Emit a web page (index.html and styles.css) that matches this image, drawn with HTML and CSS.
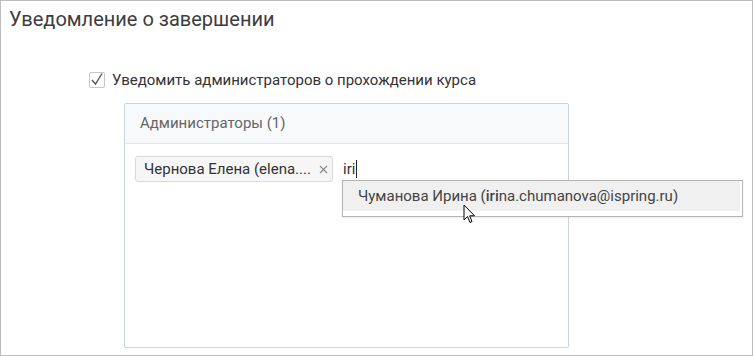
FILE: index.html
```html
<!DOCTYPE html>
<html lang="ru">
	<head>
		<meta charset="UTF-8">
		<title>Уведомление о завершении</title>
		<link rel="stylesheet" href="styles.css">
	</head>
	<body>
		<div class="frame">
			<h1 class="title">Уведомление о завершении</h1>
			<label class="check">
				<span class="box">
					<svg width="16" height="16" viewBox="0 0 16 16">
						<path d="M3 8 L6.5 12 L13 1.5" fill="none" stroke="#555" stroke-width="1.4"/>
					</svg>
				</span>
				Уведомить администраторов о прохождении курса
			</label>
			<div class="panel">
				<div class="panel-head">Администраторы (1)</div>
				<div class="panel-body">
					<div class="picker">
						<span class="tag">Чернова Елена (elena....
							<svg class="close" width="9" height="9" viewBox="0 0 9 9">
								<path d="M1 1 L8 8 M8 1 L1 8" stroke="#8a8a8a" stroke-width="1.2"/>
							</svg>
						</span>
						<span class="query">iri<b class="caret"></b></span>
						<div class="drop">
							<div class="drop-item">Чуманова Ирина (<strong>iri</strong>na.chumanova@ispring.ru)</div>
						</div>
						<svg class="cursor" width="13" height="21" viewBox="0 0 13 21">
							<path d="M1 1 L1 16 L4.5 12.5 L7 18.5 L9 17.6 L6.6 11.8 L11.5 11.8 Z" fill="#fff" stroke="#000" stroke-width="1" stroke-linejoin="round"/>
						</svg>
					</div>
				</div>
			</div>
		</div>
	</body>
</html>
```

FILE: styles.css
```css
* {
	margin: 0;
	padding: 0;
	box-sizing: border-box;
}

body {
	font-family: Roboto, "Noto Sans", sans-serif;
	color: #333;
	background: #fff;
}

.frame {
	width: 753px;
	height: 356px;
	border: 1px solid #bdbdbd;
	padding: 0 0 0 8px;
}

.title {
	font-size: 20px;
	font-weight: 400;
	color: #3d3d3d;
	line-height: 24px;
	padding-top: 6px;
}

.check {
	display: flex;
	align-items: center;
	gap: 7px;
	height: 18px;
	margin: 40px 0 0 80px;
	font-size: 15px;
	line-height: 18px;
	color: #333;
}

.box {
	display: block;
	width: 16px;
	height: 16px;
	border: 1px solid #c8c8c8;
	border-radius: 2px;
	background: #fff;
}

.box svg {
	display: block;
	margin: -1px 0 0 -1px;
}

.panel {
	width: 445px;
	height: 245px;
	margin: 14px 0 0 115px;
	border: 1px solid #c9d3db;
	border-radius: 2px;
}

.panel-head {
	height: 40px;
	line-height: 39px;
	padding-left: 15px;
	font-size: 15px;
	color: #666;
	background: #f7f9fb;
	border-bottom: 1px solid #e3e8ec;
}

.panel-body {
	padding: 12px 10px;
}

.picker {
	position: relative;
	display: flex;
	align-items: center;
	gap: 10px;
	height: 26px;
}

.tag {
	display: flex;
	align-items: center;
	justify-content: space-between;
	width: 198px;
	height: 26px;
	padding: 0 4px 0 8px;
	font-size: 15px;
	color: #333;
	background: #f6f6f6;
	border: 1px solid #d9d9d9;
	border-radius: 3px;
}

.close {
	display: block;
}

.query {
	display: flex;
	align-items: center;
	font-size: 15px;
	color: #333;
}

.caret {
	display: inline-block;
	width: 1px;
	height: 18px;
	background: #222;
	margin-left: 1px;
}

.drop {
	position: absolute;
	left: 207px;
	top: 24px;
	width: 401px;
	height: 37px;
	padding: 0 2px 5px 0;
	background: #fff;
	border: 1px solid #b4b4b4;
	box-shadow: 0 1px 2px rgba(0, 0, 0, 0.08);
}

.drop-item {
	height: 30px;
	line-height: 30px;
	padding-left: 15px;
	font-size: 15px;
	color: #444;
	background: #f0f0f0;
}

.drop-item strong {
	font-weight: 500;
}

.cursor {
	position: absolute;
	left: 328px;
	top: 48px;
}
```
